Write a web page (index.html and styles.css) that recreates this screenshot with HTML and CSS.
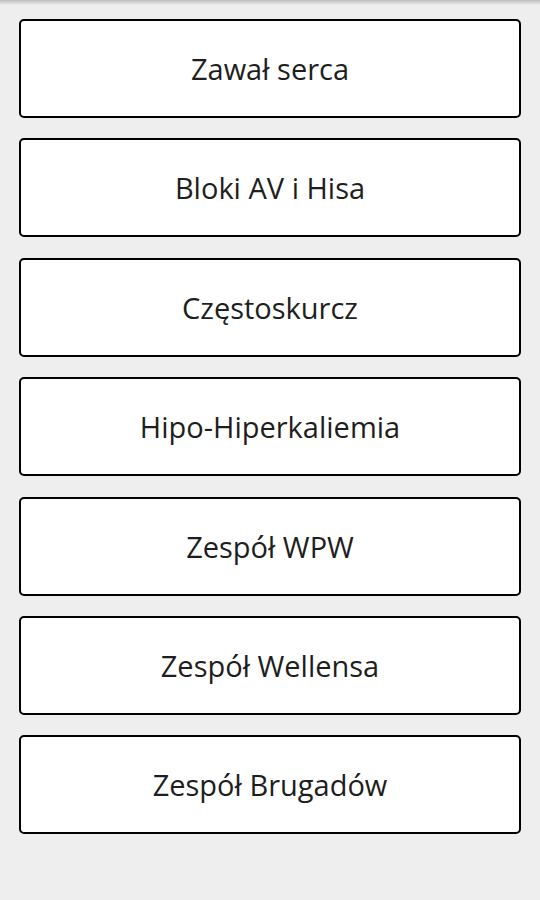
FILE: index.html
```html
<!DOCTYPE html>
<html>
<head>
<meta charset="utf-8">
<link rel="stylesheet" href="styles.css">
</head>
<body>
<div class="shadow"></div>
<main class="list">
  <button class="item">Zawał serca</button>
  <button class="item">Bloki AV i Hisa</button>
  <button class="item">Częstoskurcz</button>
  <button class="item">Hipo-Hiperkaliemia</button>
  <button class="item">Zespół WPW</button>
  <button class="item">Zespół Wellensa</button>
  <button class="item">Zespół Brugadów</button>
</main>
</body>
</html>
```
FILE: styles.css
```css
html, body {
  margin: 0;
  padding: 0;
  background: #eeeeee;
  height: 900px;
  overflow: hidden;
}
.shadow {
  position: absolute;
  top: 0;
  left: 0;
  right: 0;
  height: 5px;
  background: linear-gradient(#bdbdbd, rgba(238,238,238,0));
}
.list {
  display: flex;
  flex-direction: column;
  gap: 20.4px;
  padding: 19px 19px 0 19px;
}
.item {
  height: 99px;
  box-sizing: border-box;
  border: 2px solid #000;
  border-radius: 5px;
  background: #ffffff;
  font-family: "Open Sans", sans-serif;
  font-size: 29px;
  color: #1e1e1e;
  text-align: center;
  padding: 0;
}
```
